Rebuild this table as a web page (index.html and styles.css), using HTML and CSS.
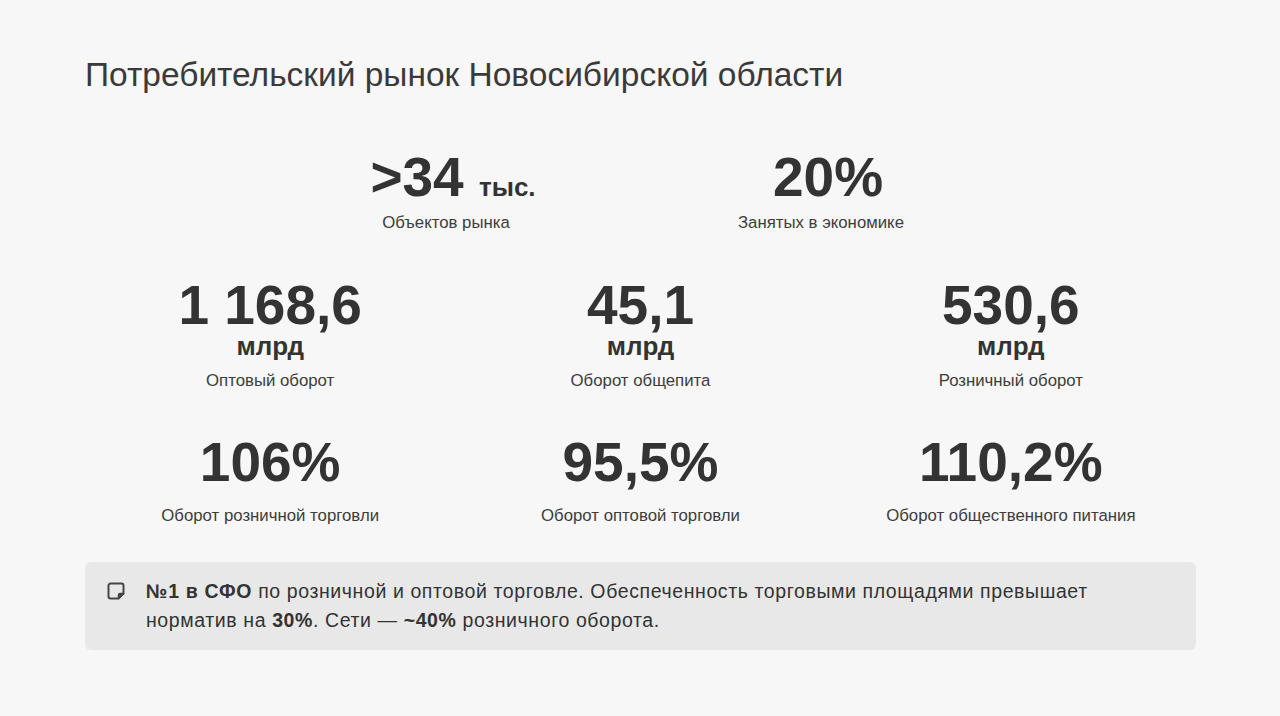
FILE: index.html
```html
<!DOCTYPE html>
<html lang="ru">
<head>
<meta charset="utf-8">
<title>Потребительский рынок Новосибирской области</title>
<link rel="stylesheet" href="styles.css">
</head>
<body>
<main class="page">
  <h1 class="title">Потребительский рынок Новосибирской области</h1>

  <section class="row row-top">
    <div class="stat">
      <div class="value">&gt;34 <span class="suffix">тыс.</span></div>
      <div class="label label-top">Объектов рынка</div>
    </div>
    <div class="stat">
      <div class="value">20%</div>
      <div class="label label-top">Занятых в экономике</div>
    </div>
  </section>

  <section class="row row-money">
    <div class="stat">
      <div class="value">1 168,6</div>
      <div class="unit">млрд</div>
      <div class="label label-money">Оптовый оборот</div>
    </div>
    <div class="stat">
      <div class="value">45,1</div>
      <div class="unit">млрд</div>
      <div class="label label-money">Оборот общепита</div>
    </div>
    <div class="stat">
      <div class="value">530,6</div>
      <div class="unit">млрд</div>
      <div class="label label-money">Розничный оборот</div>
    </div>
  </section>

  <section class="row row-pct">
    <div class="stat">
      <div class="value">106%</div>
      <div class="label label-pct">Оборот розничной торговли</div>
    </div>
    <div class="stat">
      <div class="value">95,5%</div>
      <div class="label label-pct">Оборот оптовой торговли</div>
    </div>
    <div class="stat">
      <div class="value">110,2%</div>
      <div class="label label-pct">Оборот общественного питания</div>
    </div>
  </section>

  <aside class="note">
    <svg class="note-icon" width="18" height="18" viewBox="0 0 18 18" aria-hidden="true">
      <path d="M3.5 1.5h11a2 2 0 0 1 2 2v8l-5 5h-8a2 2 0 0 1-2-2v-11a2 2 0 0 1 2-2z" fill="none" stroke="#444" stroke-width="2" stroke-linejoin="round"/>
      <path d="M16.5 11.5h-3.5a1.5 1.5 0 0 0-1.5 1.5v3.5z" fill="#444" stroke="#444" stroke-width="1.5" stroke-linejoin="round"/>
    </svg>
    <p class="note-text"><b>№1 в СФО</b> по розничной и оптовой торговле. Обеспеченность торговыми площадями превышает норматив на <b>30%</b>. Сети — <b>~40%</b> розничного оборота.</p>
  </aside>
</main>
</body>
</html>
```

FILE: styles.css
```css
* {
  box-sizing: border-box;
}

html, body {
  margin: 0;
  padding: 0;
}

body {
  background: #f7f7f7;
  color: #333333;
  font-family: "Liberation Sans", Arial, sans-serif;
  width: 1280px;
  height: 716px;
  overflow: hidden;
}

.page {
  padding: 55px 84px 0 85px;
}

.title {
  margin: 0;
  font-size: 33.5px;
  line-height: 40px;
  font-weight: 400;
  color: #3a3a3a;
}

.row {
  display: grid;
  grid-template-columns: repeat(3, 1fr);
}

.row-top {
  grid-template-columns: repeat(2, 375px);
  justify-content: center;
  margin-top: 55px;
}

.row-money {
  margin-top: 45px;
}

.row-pct {
  margin-top: 44px;
}

.stat {
  display: flex;
  flex-direction: column;
  align-items: center;
  text-align: center;
}

.value {
  font-size: 55px;
  line-height: 55px;
  font-weight: 700;
  color: #333333;
  white-space: nowrap;
}

.suffix {
  font-size: 26px;
  line-height: 1;
}

.unit {
  font-size: 26px;
  line-height: 26px;
  font-weight: 700;
  color: #333333;
}

.label {
  font-size: 16.8px;
  line-height: 20px;
  color: #3d3d3d;
}

.label-top {
  margin-top: 8px;
  padding-right: 14px;
}

.label-money {
  margin-top: 12px;
}

.label-pct {
  margin-top: 16px;
}

.note {
  margin-top: 36px;
  display: flex;
  align-items: flex-start;
  gap: 21px;
  padding: 15px 70px 15px 22px;
  background: #e8e8e8;
  border-radius: 6px;
}

.note-icon {
  flex: none;
  margin-top: 5px;
}

.note-text {
  margin: 0;
  font-size: 19.5px;
  line-height: 29px;
  letter-spacing: 0.6px;
  color: #333333;
}

.note-text b {
  font-weight: 700;
}
```
